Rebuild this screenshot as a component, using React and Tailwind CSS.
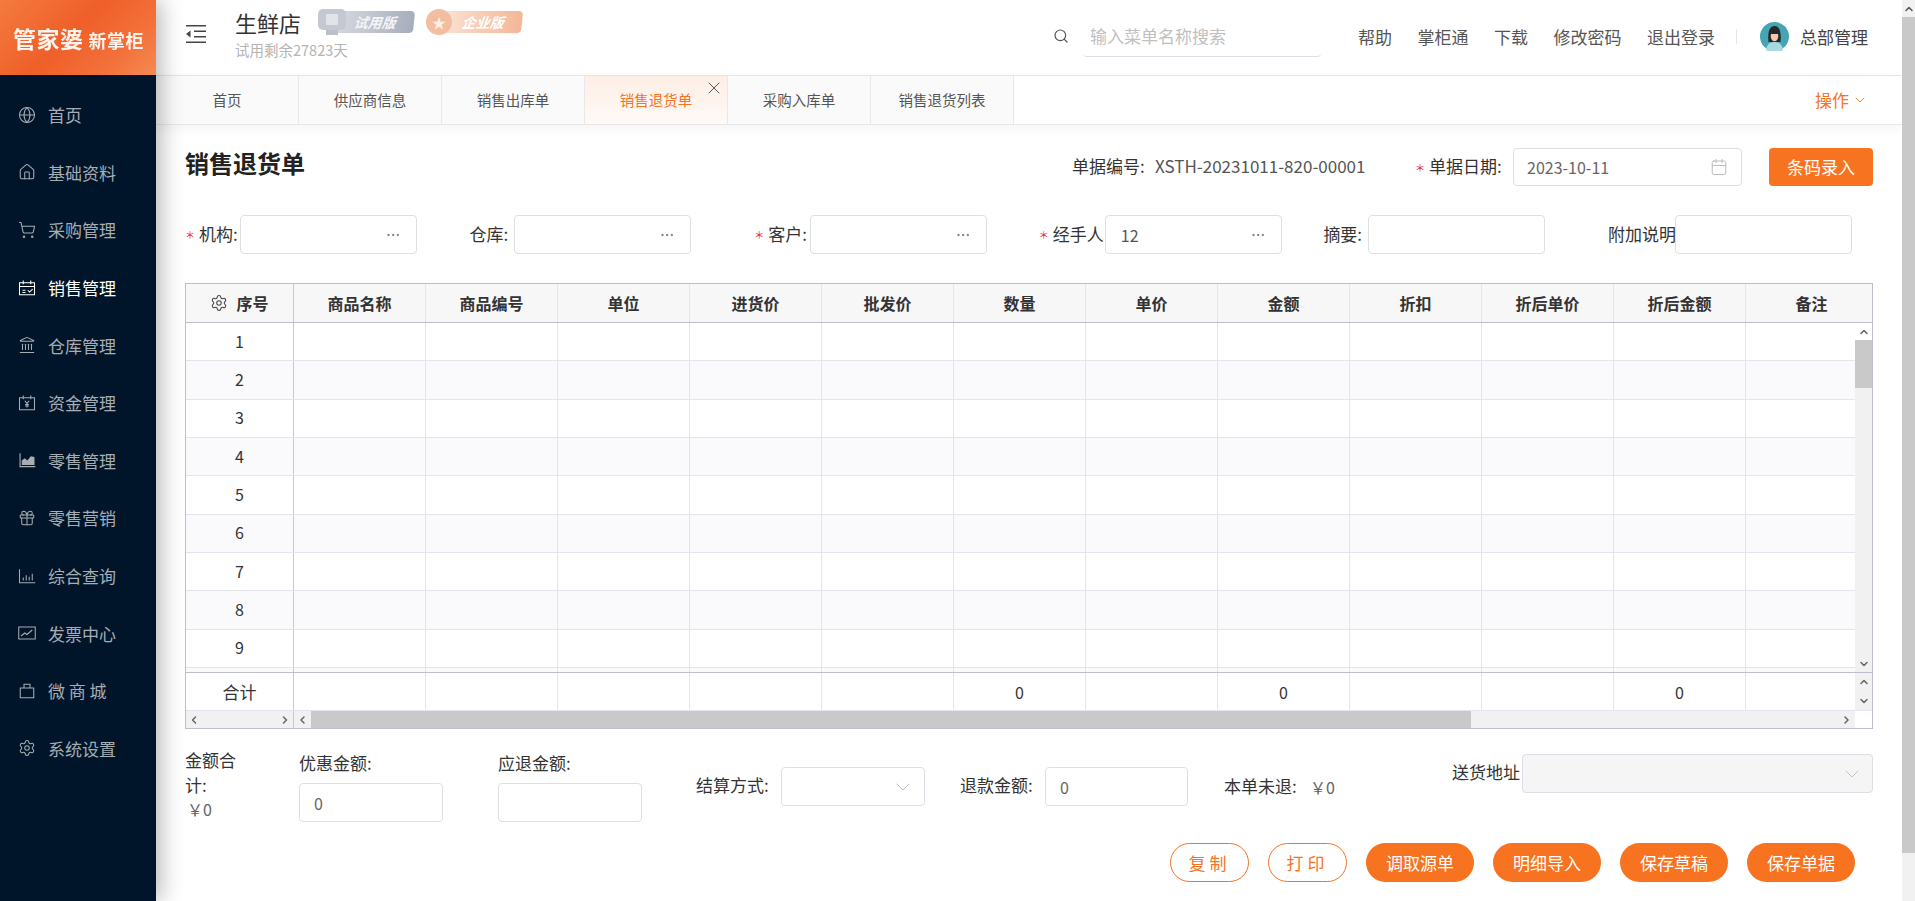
import React from "react";
import { Globe, Home, ShoppingCart, Landmark, Gift, Settings, Search, Calendar, ChevronDown, ChevronUp, ChevronLeft, ChevronRight, X, MoreHorizontal } from "lucide-react";

const font = { fontFamily: '"Noto Sans CJK SC", "Noto Sans", sans-serif' };

function SalesIcon(props) {
  return (
    <svg viewBox="0 0 24 24" fill="none" stroke="currentColor" strokeWidth="1.5" {...props}>
      <path d="M2 5h20v16H2zM2 10h20M7 2v5M17 2v5M6 15h4M6 18h4M13 15l2.500 2.500 4-4" />
    </svg>
  );
}

function MoneyIcon(props) {
  return (
    <svg viewBox="0 0 24 24" fill="none" stroke="currentColor" strokeWidth="1.5" {...props}>
      <path d="M2 5h20v16H2zM7 2v5M17 2v5M9 9l3 3.500 3-3.500M12 12.500V18M9.500 14h5M9.500 16h5" />
    </svg>
  );
}

function AreaIcon(props) {
  return (
    <svg viewBox="0 0 24 24" fill="currentColor" {...props}>
      <path d="M2 3h1.500v17H23v1.500H2z" />
      <path d="M5 18.500v-6l4-3 3.500 3L17 7l5 1v10.500z" />
    </svg>
  );
}

function BarsIcon(props) {
  return (
    <svg viewBox="0 0 24 24" fill="none" stroke="currentColor" strokeWidth="1.3" {...props}>
      <path d="M2 3v18h21M7 18v-4M11 18v-7M15 18v-5M19 18V9" />
    </svg>
  );
}

function InvoiceIcon(props) {
  return (
    <svg viewBox="0 0 24 24" fill="none" stroke="currentColor" strokeWidth="1.4" {...props}>
      <path d="M1 4h22v16H1zM4 16l5-4 3 2 7-6" />
    </svg>
  );
}

function BagIcon(props) {
  return (
    <svg viewBox="0 0 24 24" fill="none" stroke="currentColor" strokeWidth="1.6" {...props}>
      <path d="M3 8h18v13H3zM8 8V3h8v5" />
    </svg>
  );
}

const menu = [
  { name: "首页", icon: Globe },
  { name: "基础资料", icon: Home },
  { name: "采购管理", icon: ShoppingCart },
  { name: "销售管理", icon: SalesIcon, active: true },
  { name: "仓库管理", icon: Landmark },
  { name: "资金管理", icon: MoneyIcon },
  { name: "零售管理", icon: AreaIcon },
  { name: "零售营销", icon: Gift },
  { name: "综合查询", icon: BarsIcon },
  { name: "发票中心", icon: InvoiceIcon },
  { name: "微 商 城", icon: BagIcon },
  { name: "系统设置", icon: Settings },
];

const tabs = ["首页", "供应商信息", "销售出库单", "销售退货单", "采购入库单", "销售退货列表"];
const links = ["帮助", "掌柜通", "下载", "修改密码", "退出登录"];
const columns = ["商品名称", "商品编号", "单位", "进货价", "批发价", "数量", "单价", "金额", "折扣", "折后单价", "折后金额", "备注"];
const rows = [1, 2, 3, 4, 5, 6, 7, 8, 9, ""];
const totals = { 5: "0", 7: "0", 10: "0" };

function Sidebar() {
  return (
    <aside className="w-[156px] h-[901px] shrink-0 bg-[#001529] shadow-[4px_0_22px_rgba(0,0,0,0.3)] z-10">
      <div className="h-[75px] flex items-center pl-[13px] pt-[1px] text-[#fff3ec] font-bold whitespace-nowrap bg-[linear-gradient(135deg,#f47a3d_0%,#ef5f29_45%,#f3703a_75%,#f58a52_100%)]">
        <span className="text-[23px] tracking-[0.5px] leading-none blur-[0.4px]">管家婆</span>
        <span className="text-[18px] tracking-[0.5px] leading-none ml-[5px] mt-[3px] blur-[0.4px]">新掌柜</span>
      </div>
      <nav className="pt-[11px]">
        {menu.map((item) => {
          const Icon = item.icon;
          return (
            <div key={item.name} className={`h-[57.6px] flex items-center pl-[18px] ${item.active ? "text-white" : "text-[#a6adb4]"}`}>
              <Icon className="w-[18px] h-[18px] shrink-0" strokeWidth={1.4} />
              <span className="ml-[12px] text-[17px] leading-none whitespace-nowrap">{item.name}</span>
            </div>
          );
        })}
      </nav>
    </aside>
  );
}

function Header() {
  return (
    <header className="h-[76px] flex border-b border-[#e8e8e8] pl-[30px] pr-[34px] bg-white">
      <svg viewBox="0 0 20 18" className="mt-[25px] w-5 h-[18px] text-[#444] shrink-0" fill="currentColor">
        <path d="M0 0h20v1.600H0zM0 16.400h20V18H0zM8 5.500h12v1.600H8zM8 10.900h12v1.600H8zM4.500 5.500v7L0 9z" />
      </svg>
      <div className="ml-[29px] w-[287px] shrink-0">
        <div className="flex items-center h-[30px] mt-[7px]">
          <span className="text-[22px] leading-none text-[#333]">生鲜店</span>
          <span className="ml-[17px] relative w-[96px] h-[26px] block">
            <span className="absolute left-[14px] right-0 top-[2px] h-[22px] rounded-r-[4px] skew-x-[-6deg] bg-[linear-gradient(90deg,#d9dbe1,#a6adbc)] text-[#f3f4f6] italic font-bold text-[14px] leading-[22px] pl-[22px]">试用版</span>
            <span className="absolute left-0 top-0 w-[28px] h-[21px] rounded-[5px] bg-[#c5c8d1] flex items-center justify-center">
              <span className="w-[12px] h-[11px] bg-[#e2e4ea] rounded-[1px]"></span>
            </span>
            <span className="absolute left-[8px] top-[21px] w-[12px] h-[5px] bg-[#bcc0ca]"></span>
          </span>
          <span className="ml-[12px] relative w-[96px] h-[26px] block">
            <span className="absolute left-[14px] right-0 top-[2px] h-[22px] rounded-r-[4px] skew-x-[-6deg] bg-[linear-gradient(90deg,#fae4d6,#f4b696)] text-white italic font-bold text-[14px] leading-[22px] pl-[22px]">企业版</span>
            <span className="absolute left-0 top-0 w-[26px] h-[26px] rounded-full bg-[#f3bd9f] flex items-center justify-center text-[#fbeee6] text-[14px] leading-none">★</span>
          </span>
        </div>
        <div className="text-[14.500px] leading-[18px] mt-[4px] text-[#b4b4b4]">试用剩余27823天</div>
      </div>
      <div className="ml-auto flex items-center -mt-[3px]">
        <Search className="w-4 h-4 text-[#555]" strokeWidth={1.8} />
        <div className="ml-[14px] w-[238px] h-[38px] mt-[3px] border-b border-[#dcdfe6] rounded-b-[4px] text-[17px] leading-[34px] pl-[7px] text-[#c0c0c0]">输入菜单名称搜索</div>
        <div className="ml-[37px] flex gap-[25.500px]">
          {links.map((link) => (
            <span key={link} className="text-[17px] leading-none text-[#555] whitespace-nowrap">{link}</span>
          ))}
        </div>
        <span className="ml-[21px] w-px h-[15px] bg-[#e6e6e6]"></span>
        <svg viewBox="0 0 29 29" className="ml-[23px] w-[29px] h-[29px] shrink-0">
          <circle cx="14.500" cy="14.500" r="14.500" fill="#46a5b3" />
          <path d="M6 28c1-6 4-8 8.500-8s7.500 2 8.500 8a14.500 14.500 0 0 1-17 0z" fill="#a9d8e0" />
          <path d="M8.500 20c-1-10 1-16 6-16s7 6 6 16z" fill="#26272b" />
          <ellipse cx="14.500" cy="14" rx="3.800" ry="5.200" fill="#f1c9b0" />
          <path d="M10.500 12c1-3 2.500-4 4-4s3 1 4 4z" fill="#26272b" />
        </svg>
        <span className="ml-[11px] text-[17px] leading-none text-[#444] whitespace-nowrap">总部管理</span>
      </div>
    </header>
  );
}

function Tabs() {
  return (
    <div className="h-[49px] flex border-b border-[#e8e8e8] bg-white shadow-[0_3px_12px_rgba(0,0,0,0.05)]">
      {tabs.map((tab) => {
        const active = tab === "销售退货单";
        return (
          <div
            key={tab}
            className={`relative w-[143px] shrink-0 flex items-center justify-center border-r border-[#e8e8e8] text-[14.500px] ${
              active ? "text-[#f7731f] bg-[linear-gradient(180deg,#fdeee5,#fffaf7)]" : "text-[#555] bg-[#fafafa]"
            }`}
          >
            {tab}
            {active && <X className="absolute top-[2px] right-[3px] w-5 h-5 text-[#555]" strokeWidth={1.2} />}
          </div>
        );
      })}
      <div className="ml-auto mr-[34px] flex items-center text-[#f7731f] text-[17px]">
        操作
        <ChevronDown className="ml-[3px] w-4 h-4" strokeWidth={1.3} />
      </div>
    </div>
  );
}

function Star() {
  return <span className="text-[#e8202a] text-[10px] w-[14px] shrink-0">＊</span>;
}

function PickField({ star, label, value, labelClass }) {
  return (
    <div className="flex items-center">
      {star && <Star />}
      <span className={`text-[17px] text-[#333] whitespace-nowrap -mt-[2px] shrink-0 ${labelClass || ""}`}>{label}</span>
      <div className="w-[177px] h-[39px] border border-[#dcdfe6] rounded-[4px] bg-white flex items-center justify-between pl-[15px] pr-[15px] text-[16px] text-[#555] shrink-0">
        <span>{value}</span>
        {value !== undefined && <MoreHorizontal className="w-4 h-4 text-[#666]" strokeWidth={1.3} />}
      </div>
    </div>
  );
}

function Cell({ children, className }) {
  return (
    <div className={`w-[132px] h-full shrink-0 border-r border-[#e4e4ee] flex items-center justify-center text-[16px] text-[#333] ${className || ""}`}>
      {children}
    </div>
  );
}

function Table() {
  return (
    <div className="h-[446px] border border-[#bcbeca] flex flex-col overflow-hidden bg-white">
      <div className="h-[39px] shrink-0 flex border-b border-[#bcbeca] bg-[#f7f7f8]">
        <div className="w-[108px] shrink-0 border-r border-[#c8c9d4] flex items-center justify-center gap-[8px] text-[16px] font-bold text-[#333]">
          <Settings className="w-[18px] h-[18px] text-[#444]" strokeWidth={1.4} />
          序号
        </div>
        {columns.map((c) => (
          <Cell key={c} className={`font-bold ${c === "备注" ? "w-[126px]" : ""}`}>{c}</Cell>
        ))}
      </div>
      <div className="h-[349px] shrink-0 flex overflow-hidden">
        <div className="w-[1669px] shrink-0 overflow-hidden">
          {rows.map((r, i) => (
            <div key={i} className={`h-[38.330px] flex border-b border-[#e4e4ee] ${i % 2 ? "bg-[#fafafc]" : "bg-white"}`}>
              <div className="w-[108px] shrink-0 border-r border-[#c8c9d4] flex items-center justify-center pb-[2px] text-[16px] text-[#333]">{r}</div>
              {columns.map((c) => (
                <Cell key={c} />
              ))}
            </div>
          ))}
        </div>
        <div className="w-[17px] shrink-0 bg-[#f1f1f1] flex flex-col">
          <div className="h-[17px] bg-white flex items-center justify-center">
            <ChevronUp className="w-3 h-3 text-[#666]" strokeWidth={3} />
          </div>
          <div className="h-[48px] bg-[#c9c9c9]"></div>
          <div className="mt-auto h-[17px] flex items-center justify-center">
            <ChevronDown className="w-3 h-3 text-[#666]" strokeWidth={3} />
          </div>
        </div>
      </div>
      <div className="h-[39px] shrink-0 flex border-t border-b border-t-[#bcbeca] border-b-[#e4e4ee]">
        <div className="w-[1669px] shrink-0 flex overflow-hidden">
          <div className="w-[108px] shrink-0 border-r border-[#c8c9d4] flex items-center justify-center text-[17px] text-[#333]">合计</div>
          {columns.map((c, i) => (
            <Cell key={c}>{totals[i]}</Cell>
          ))}
        </div>
        <div className="w-[17px] shrink-0 bg-[#f1f1f1] flex flex-col items-center justify-between py-[3px]">
          <ChevronUp className="w-3 h-3 text-[#666]" strokeWidth={3} />
          <ChevronDown className="w-3 h-3 text-[#666]" strokeWidth={3} />
        </div>
      </div>
      <div className="flex-1 flex">
        <div className="w-[108px] shrink-0 border-r border-[#c8c9d4] bg-[#f1f1f1] flex items-center justify-between px-[2px]">
          <ChevronLeft className="w-3 h-3 text-[#666]" strokeWidth={3} />
          <ChevronRight className="w-3 h-3 text-[#666]" strokeWidth={3} />
        </div>
        <div className="w-[1561px] shrink-0 bg-[#f1f1f1] flex items-center">
          <ChevronLeft className="w-[17px] h-3 text-[#666] shrink-0" strokeWidth={3} />
          <div className="w-[1160px] h-full bg-[#c9c9c9]"></div>
          <ChevronRight className="ml-auto w-[17px] h-3 text-[#666] shrink-0" strokeWidth={3} />
        </div>
      </div>
    </div>
  );
}

function Box({ value, className }) {
  return (
    <div className={`h-[39px] border border-[#dcdfe6] rounded-[4px] bg-white flex items-center pl-[14px] text-[16px] text-[#666] shrink-0 ${className || ""}`}>
      {value}
    </div>
  );
}

function Footer() {
  return (
    <div className="mt-[18px] flex text-[16px] text-[#333]">
      <div className="w-[114px] shrink-0">
        <div className="w-[58px] leading-[25px] text-[17px]">金额合计:</div>
        <div className="pl-[2px] leading-[25px] text-[#666]">￥0</div>
      </div>
      <div className="w-[199px] shrink-0 pt-[4px]">
        <div className="leading-[24px] text-[17px] mb-[8px]">优惠金额:</div>
        <Box value="0" className="w-[144px]" />
      </div>
      <div className="w-[198px] shrink-0 pt-[4px]">
        <div className="leading-[24px] text-[17px] mb-[8px]">应退金额:</div>
        <Box className="w-[144px]" />
      </div>
      <div className="w-[264px] shrink-0 flex items-center h-[39px] mt-[20px]">
        <span className="w-[85px] text-[17px] whitespace-nowrap -mt-[3px]">结算方式:</span>
        <div className="w-[144px] h-[39px] border border-[#dcdfe6] rounded-[4px] flex items-center justify-end pr-[9px]">
          <ChevronDown className="w-6 h-6 text-[#bbb]" strokeWidth={1} />
        </div>
      </div>
      <div className="w-[264px] shrink-0 flex items-center h-[39px] mt-[20px]">
        <span className="w-[85px] text-[17px] whitespace-nowrap -mt-[3px]">退款金额:</span>
        <Box value="0" className="w-[143px]" />
      </div>
      <div className="w-[228px] shrink-0 h-[39px] mt-[20px] flex items-center whitespace-nowrap">
        <span className="w-[86px] text-[17px] -mt-[2px]">本单未退:</span>
        <span className="text-[#666]">￥0</span>
      </div>
      <div className="flex items-center h-[39px] mt-[7px]">
        <span className="w-[70px] text-[17px] whitespace-nowrap -mt-[3px]">送货地址</span>
        <div className="w-[351px] h-[39px] border border-[#dcdfe6] rounded-[4px] bg-[#f5f5f5] flex items-center justify-end pr-[8px]">
          <ChevronDown className="w-6 h-6 text-[#c4c4c4]" strokeWidth={1} />
        </div>
      </div>
    </div>
  );
}

function Actions() {
  return (
    <div className="mt-[21px] pr-[18px] flex justify-end gap-[19px]">
      <button className="w-[79px] h-[39px] rounded-full border border-[#f7731f] text-[#f7731f] text-[17px] tracking-[4px]">复制</button>
      <button className="w-[79px] h-[39px] rounded-full border border-[#f7731f] text-[#f7731f] text-[17px] tracking-[4px]">打印</button>
      {["调取源单", "明细导入", "保存草稿", "保存单据"].map((b) => (
        <button key={b} className="w-[108px] h-[39px] rounded-full bg-[#f7731f] text-white text-[17px]">{b}</button>
      ))}
    </div>
  );
}

export default function App() {
  return (
    <div style={font} className="w-[1915px] h-[901px] flex overflow-hidden bg-white">
      <Sidebar />
      <main className="w-[1746px] shrink-0 flex flex-col">
        <Header />
        <Tabs />
        <div className="px-[29px]">
          <div className="mt-[23px] h-[38px] flex items-center">
            <h1 className="text-[24px] font-bold text-[#222] leading-none -mt-[8px]">销售退货单</h1>
            <div className="ml-auto flex items-center text-[17px] whitespace-nowrap">
              <span className="w-[83px] text-[#333] -mt-[2px]">单据编号:</span>
              <span className="w-[210px] text-[#555] -mt-[2px]">XSTH-20231011-820-00001</span>
              <span className="ml-[50px] flex items-center"><Star /></span>
              <span className="w-[84px] text-[#333] -mt-[2px]">单据日期:</span>
              <div className="w-[229px] h-[38px] border border-[#dcdfe6] rounded-[4px] flex items-center justify-between pl-[13px] pr-[13px] text-[16px] text-[#666]">
                2023-10-11
                <Calendar className="w-[18px] h-[18px] text-[#bbb]" strokeWidth={1.3} />
              </div>
              <button className="ml-[27px] w-[104px] h-[38px] rounded-[4px] bg-[#f7731f] text-white text-[17px]">条码录入</button>
            </div>
          </div>
          <div className="mt-[29px] grid grid-cols-[repeat(6,284.600px)]">
            <PickField star label="机构:" value="" labelClass="w-[41px]" />
            <PickField label="仓库:" value="" labelClass="w-[44px]" />
            <PickField star label="客户:" value="" labelClass="w-[42px]" />
            <PickField star label="经手人" value="12" labelClass="w-[52px]" />
            <PickField label="摘要:" labelClass="w-[45px]" />
            <PickField label="附加说明" labelClass="w-[67px]" />
          </div>
          <div className="mt-[29px]">
            <Table />
          </div>
          <Footer />
          <Actions />
        </div>
      </main>
      <div className="w-[13px] h-[901px] shrink-0 bg-[#f1f1f1] flex flex-col">
        <div className="h-[17px] flex items-center justify-center">
          <ChevronUp className="w-3 h-3 text-[#555]" strokeWidth={3} />
        </div>
        <div className="h-[836px] bg-[#c9c9c9]"></div>
      </div>
    </div>
  );
}
